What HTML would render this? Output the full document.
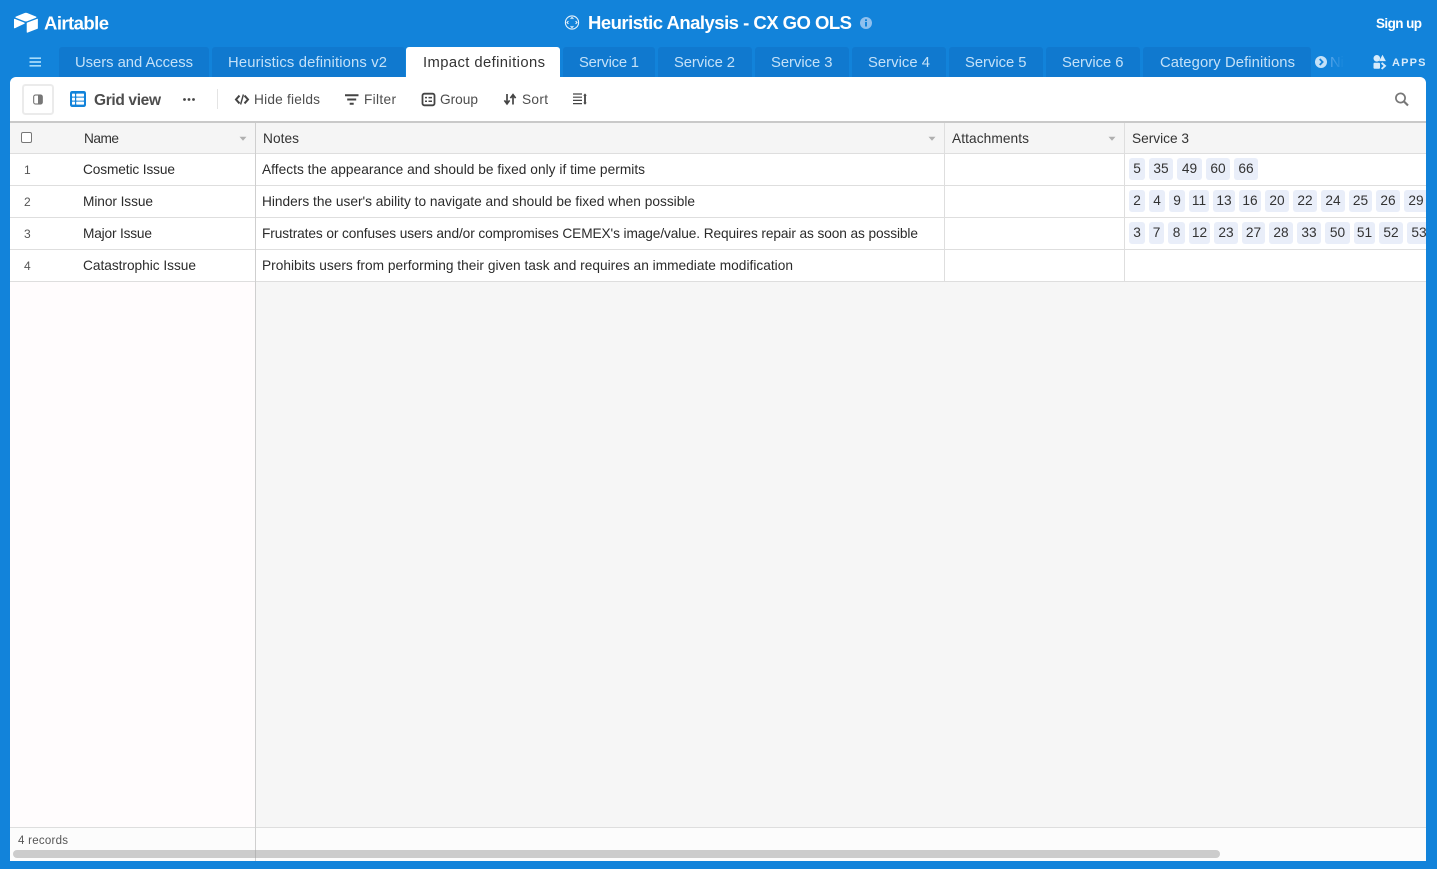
<!DOCTYPE html>
<html><head><meta charset="utf-8"><title>Heuristic Analysis - CX GO OLS</title>
<style>
html,body{margin:0;padding:0;background:#1283da;overflow:hidden}
svg{display:block}
text{font-family:"Liberation Sans",sans-serif;fill:#333;white-space:pre}
.tab{font-size:14.8px;fill:#c4e1f8}
.tb{font-size:13.7px;fill:#4d4d4d}
.h{font-size:13.7px;fill:#333}
.c{font-size:13.7px;fill:#2b2b2b}
.n{font-size:12px;fill:#555}
.chip{font-size:13.7px;fill:#333;text-anchor:middle}
</style></head><body>
<svg width="1437" height="869" viewBox="0 0 1437 869" xmlns="http://www.w3.org/2000/svg">
<defs>
<linearGradient id="fade" x1="0" x2="1"><stop offset="0" stop-color="#5ba8ea"/><stop offset="1" stop-color="#1283da"/></linearGradient>
<clipPath id="grid"><rect x="1125" y="154" width="301" height="128"/></clipPath>
</defs>
<rect width="1437" height="869" fill="#1283da"/>

<!-- logo -->
<g transform="translate(12.5,11.3) scale(.135)" fill="#fff">
<path d="M90.04 12.37L24.08 39.66C20.41 41.18 20.45 46.39 24.14 47.85L90.38 74.12C96.2 76.43 102.68 76.43 108.5 74.12L174.73 47.85C178.42 46.39 178.46 41.18 174.79 39.66L108.83 12.37C102.82 9.88 96.06 9.88 90.04 12.37"/>
<path d="M105.31 88.46V154.08C105.31 157.2 108.46 159.33 111.36 158.18L185.17 129.54C186.85 128.87 187.96 127.24 187.96 125.43V59.81C187.96 56.69 184.81 54.55 181.91 55.7L108.1 84.35C106.42 85.02 105.31 86.65 105.31 88.46"/>
<path d="M88.08 91.85L66.17 102.42L63.95 103.5L17.71 125.65C14.78 127.07 11.04 124.93 11.04 121.67V60.09C11.04 58.91 11.64 57.89 12.45 57.13C12.79 56.79 13.18 56.51 13.57 56.29C14.68 55.63 16.25 55.45 17.59 55.98L87.71 83.76C91.27 85.17 91.55 90.17 88.08 91.85"/>
</g>
<text x="44" y="29.5" textLength="65" style="font-size:18.5px;font-weight:bold;fill:#fff">Airtable</text>

<!-- title -->
<g fill="none" stroke="#fff" stroke-width="1.1" opacity=".9">
<circle cx="572" cy="22.5" r="6.6"/>
<path d="M570.6 18.9l1.4-1.4 1.4 1.4M570.6 26.1l1.4 1.4 1.4-1.4M568.4 21.1l-1.4 1.4 1.4 1.4M575.6 21.1l1.4 1.4-1.4 1.4"/>
</g>
<text x="588" y="29" textLength="264" style="font-size:18.5px;font-weight:bold;fill:#fff">Heuristic Analysis - CX GO OLS</text>
<circle cx="866" cy="23" r="6" fill="#8fc0ee"/>
<rect x="865" y="22" width="2" height="4.5" fill="#1283da"/><rect x="865" y="19.3" width="2" height="1.8" fill="#1283da"/>
<text x="1376" y="28" textLength="46" style="font-size:13.5px;font-weight:bold;fill:#fff">Sign up</text>

<!-- hamburger -->
<path d="M29.5 58.2h11.5M29.5 62h11.5M29.5 65.8h11.5" stroke="#a6dcfb" stroke-width="1.7" fill="none"/>

<!-- tabs -->
<g fill="#1079cf">
<path d="M59 77V50a3 3 0 0 1 3-3h144a3 3 0 0 1 3 3v27z"/>
<path d="M212 77V50a3 3 0 0 1 3-3h187a3 3 0 0 1 3 3v27z"/>
<path d="M563 77V50a3 3 0 0 1 3-3h86a3 3 0 0 1 3 3v27z"/>
<path d="M658 77V50a3 3 0 0 1 3-3h88a3 3 0 0 1 3 3v27z"/>
<path d="M755 77V50a3 3 0 0 1 3-3h88a3 3 0 0 1 3 3v27z"/>
<path d="M852 77V50a3 3 0 0 1 3-3h88a3 3 0 0 1 3 3v27z"/>
<path d="M949 77V50a3 3 0 0 1 3-3h88a3 3 0 0 1 3 3v27z"/>
<path d="M1046 77V50a3 3 0 0 1 3-3h88a3 3 0 0 1 3 3v27z"/>
<path d="M1143 77V50a3 3 0 0 1 3-3h162a3 3 0 0 1 3 3v27z"/>
</g>
<path d="M406 78V50a3 3 0 0 1 3-3h148a3 3 0 0 1 3 3v28z" fill="#fff"/>
<text class="tab" x="75" y="67" textLength="118">Users and Access</text>
<text class="tab" x="228" y="67" textLength="159">Heuristics definitions v2</text>
<text x="423" y="67" textLength="122" style="font-size:14.8px;fill:#333">Impact definitions</text>
<text class="tab" x="579" y="67" textLength="60">Service 1</text>
<text class="tab" x="674" y="67" textLength="61">Service 2</text>
<text class="tab" x="771" y="67" textLength="61.5">Service 3</text>
<text class="tab" x="868" y="67" textLength="62">Service 4</text>
<text class="tab" x="965" y="67" textLength="61.5">Service 5</text>
<text class="tab" x="1062" y="67" textLength="61.5">Service 6</text>
<text class="tab" x="1160" y="67" textLength="135">Category Definitions</text>

<circle cx="1321" cy="62" r="6" fill="#c4e1f8"/>
<path d="M1319.7 59l2.9 3-2.9 3" fill="none" stroke="#1283da" stroke-width="1.8"/>
<text x="1330" y="67" style="font-size:14.8px;fill:url(#fade)">Ni</text>

<g fill="#d7ebfb">
<circle cx="1376.8" cy="58.3" r="3.3"/>
<path d="M1382.5 54.8l3.4 6.3h-6.8z"/>
<rect x="1373.5" y="62.8" width="6.5" height="6" rx="1"/>
</g>
<path d="M1381.6 62.9l3.4 3-3.4 3" fill="none" stroke="#d7ebfb" stroke-width="1.9"/>
<text x="1392" y="66" textLength="33.5" style="font-size:11px;font-weight:bold;fill:#d7ebfb">APPS</text>

<!-- card -->
<path d="M10 861V83a6 6 0 0 1 6-6h390v1h154v-1h860a6 6 0 0 1 6 6v778z" fill="#fff"/>

<!-- toolbar -->
<rect x="23" y="85" width="30" height="29" rx="2.5" fill="#fff" stroke="#ebebeb" stroke-width="2"/>
<rect x="33.7" y="95" width="8.6" height="9" rx="1.8" fill="#fff" stroke="#666" stroke-width="1"/>
<path d="M38 95h2.5a1.8 1.8 0 0 1 1.8 1.8v5.4a1.8 1.8 0 0 1-1.8 1.8H38z" fill="#777"/>

<rect x="70" y="91" width="16" height="16" rx="2.2" fill="#1283da"/>
<g fill="#fff">
<rect x="72" y="93.6" width="3" height="3" rx=".6"/><rect x="76.2" y="93.6" width="7.8" height="3" rx=".6"/>
<rect x="72" y="97.6" width="3" height="3" rx=".6"/><rect x="76.2" y="97.6" width="7.8" height="3" rx=".6"/>
<rect x="72" y="101.6" width="3" height="3" rx=".6"/><rect x="76.2" y="101.6" width="7.8" height="3" rx=".6"/>
</g>
<text x="94" y="105" textLength="67" style="font-size:15.5px;font-weight:bold;fill:#4d4d4d">Grid view</text>
<g fill="#444"><circle cx="184.5" cy="99.5" r="1.4"/><circle cx="189" cy="99.5" r="1.4"/><circle cx="193.5" cy="99.5" r="1.4"/></g>
<rect x="217" y="89" width="1" height="20" fill="#e4e4e4"/>

<g fill="none" stroke="#444" stroke-width="2">
<path d="M239.5 95.6l-3.5 3.9 3.5 3.9M244.5 95.6l3.5 3.9-3.5 3.9"/>
<path d="M243.4 94.5l-2.8 10" stroke-width="1.4"/>
</g>
<text class="tb" x="254" y="104" textLength="66">Hide fields</text>

<path d="M345 95.2h13.5M347.2 99.5h9M349.7 103.7h4" stroke="#444" stroke-width="2" fill="none"/>
<text class="tb" x="364" y="104" textLength="32">Filter</text>

<rect x="422.5" y="93.7" width="12" height="11.6" rx="1.8" fill="none" stroke="#444" stroke-width="1.8"/>
<path d="M425 97.6h2M425 101.3h2M428.5 97.6h3.5M428.5 101.3h3.5" stroke="#444" stroke-width="1.5" fill="none"/>
<text class="tb" x="440" y="104" textLength="38">Group</text>

<path d="M507 94v9.5M504.4 100.4l2.6 3.4 2.6-3.4M513 104.5v-9.5M510.4 98.1l2.6-3.4 2.6 3.4" stroke="#444" stroke-width="1.7" fill="none"/>
<text class="tb" x="522" y="104" textLength="26">Sort</text>

<path d="M573 94h9M573 97.2h9M573 100.4h9M573 103.6h9" stroke="#444" stroke-width="1.2" fill="none"/>
<path d="M585 95v8" stroke="#444" stroke-width="1.8" fill="none"/>
<path d="M583.2 95.6l1.8-2.2 1.8 2.2zM583.2 102.6l1.8 2.2 1.8-2.2z" fill="#444"/>

<circle cx="1400.5" cy="98" r="4.6" fill="none" stroke="#777" stroke-width="1.7"/>
<path d="M1404 101.5l4 4" stroke="#777" stroke-width="2.1" fill="none"/>

<!-- grid backgrounds -->
<rect x="10" y="121" width="1416" height="2" fill="#c9c9c9"/>
<rect x="10" y="123" width="1416" height="30" fill="#f5f5f5"/>
<rect x="256" y="282" width="1170" height="545" fill="#f6f6f6"/>
<rect x="10" y="282" width="245" height="545" fill="#fffcfd"/>
<rect x="10" y="828" width="1416" height="33" fill="#fcfcfc"/>
<g fill="#dedede">
<rect x="10" y="153" width="1416" height="1"/>
<rect x="10" y="185" width="1416" height="1"/>
<rect x="10" y="217" width="1416" height="1"/>
<rect x="10" y="249" width="1416" height="1"/>
<rect x="10" y="281" width="1416" height="1"/>
<rect x="10" y="827" width="1416" height="1"/>
<rect x="944" y="123" width="1" height="159"/>
<rect x="1124" y="123" width="1" height="159"/>
</g>
<rect x="255" y="123" width="1" height="738" fill="#cfcfcf"/>

<!-- header -->
<rect x="21.5" y="132.5" width="10" height="10" rx="1.5" fill="#fff" stroke="#777" stroke-width="1"/>
<text class="h" x="84" y="143" textLength="35">Name</text>
<text class="h" x="263" y="143" textLength="36">Notes</text>
<text class="h" x="952" y="143" textLength="77">Attachments</text>
<text class="h" x="1132" y="143" textLength="57">Service 3</text>
<g fill="#b0b0b0">
<path d="M239.5 136.8h7l-3.5 4z"/>
<path d="M928.5 136.8h7l-3.5 4z"/>
<path d="M1108.5 136.8h7l-3.5 4z"/>
</g>

<!-- rows -->
<text class="n" x="24" y="174">1</text>
<text class="n" x="24" y="206">2</text>
<text class="n" x="24" y="238">3</text>
<text class="n" x="24" y="270">4</text>
<text class="c" x="83" y="174" textLength="92">Cosmetic Issue</text>
<text class="c" x="83" y="206" textLength="70">Minor Issue</text>
<text class="c" x="83" y="238" textLength="69">Major Issue</text>
<text class="c" x="83" y="270" textLength="113">Catastrophic Issue</text>
<text class="c" x="262" y="174" textLength="383">Affects the appearance and should be fixed only if time permits</text>
<text class="c" x="262" y="206" textLength="433">Hinders the user's ability to navigate and should be fixed when possible</text>
<text class="c" x="262" y="238" textLength="656">Frustrates or confuses users and/or compromises CEMEX's image/value. Requires repair as soon as possible</text>
<text class="c" x="262" y="270" textLength="531">Prohibits users from performing their given task and requires an immediate modification</text>

<!-- chips -->
<g clip-path="url(#grid)">
<g fill="#e9eef9">
<rect x="1129" y="158" width="16" height="22" rx="3"/><rect x="1149" y="158" width="24" height="22" rx="3"/><rect x="1177" y="158" width="25" height="22" rx="3"/><rect x="1206" y="158" width="24" height="22" rx="3"/><rect x="1234" y="158" width="24" height="22" rx="3"/>
<rect x="1129" y="190" width="16" height="22" rx="3"/><rect x="1149" y="190" width="16" height="22" rx="3"/><rect x="1169" y="190" width="16" height="22" rx="3"/><rect x="1189" y="190" width="20" height="22" rx="3"/><rect x="1213" y="190" width="22" height="22" rx="3"/><rect x="1239" y="190" width="22" height="22" rx="3"/><rect x="1265" y="190" width="24" height="22" rx="3"/><rect x="1293" y="190" width="24" height="22" rx="3"/><rect x="1321" y="190" width="24" height="22" rx="3"/><rect x="1349" y="190" width="23" height="22" rx="3"/><rect x="1376" y="190" width="24" height="22" rx="3"/><rect x="1404" y="190" width="24" height="22" rx="3"/>
<rect x="1129" y="222" width="16" height="22" rx="3"/><rect x="1149" y="222" width="15" height="22" rx="3"/><rect x="1168" y="222" width="17" height="22" rx="3"/><rect x="1189" y="222" width="21" height="22" rx="3"/><rect x="1214" y="222" width="24" height="22" rx="3"/><rect x="1242" y="222" width="23" height="22" rx="3"/><rect x="1269" y="222" width="24" height="22" rx="3"/><rect x="1297" y="222" width="24" height="22" rx="3"/><rect x="1325" y="222" width="25" height="22" rx="3"/><rect x="1354" y="222" width="21" height="22" rx="3"/><rect x="1379" y="222" width="24" height="22" rx="3"/><rect x="1407" y="222" width="24" height="22" rx="3"/>
</g>
<text class="chip" x="1137" y="173">5</text><text class="chip" x="1161" y="173">35</text><text class="chip" x="1189.5" y="173">49</text><text class="chip" x="1218" y="173">60</text><text class="chip" x="1246" y="173">66</text>
<text class="chip" x="1137" y="205">2</text><text class="chip" x="1157" y="205">4</text><text class="chip" x="1177" y="205">9</text><text class="chip" x="1199" y="205">11</text><text class="chip" x="1224" y="205">13</text><text class="chip" x="1250" y="205">16</text><text class="chip" x="1277" y="205">20</text><text class="chip" x="1305" y="205">22</text><text class="chip" x="1333" y="205">24</text><text class="chip" x="1360.5" y="205">25</text><text class="chip" x="1388" y="205">26</text><text class="chip" x="1416" y="205">29</text>
<text class="chip" x="1137" y="237">3</text><text class="chip" x="1156.5" y="237">7</text><text class="chip" x="1176.5" y="237">8</text><text class="chip" x="1199.5" y="237">12</text><text class="chip" x="1226" y="237">23</text><text class="chip" x="1253.5" y="237">27</text><text class="chip" x="1281" y="237">28</text><text class="chip" x="1309" y="237">33</text><text class="chip" x="1337.5" y="237">50</text><text class="chip" x="1364.5" y="237">51</text><text class="chip" x="1391" y="237">52</text><text class="chip" x="1419" y="237">53</text>
</g>

<!-- footer -->
<text x="18" y="844" textLength="50" style="font-size:11.5px;fill:#555">4 records</text>
<rect x="13" y="850" width="1207" height="8" rx="4" fill="#cccccc"/>
<rect x="255" y="850" width="1" height="8" fill="#b5b5b5"/>
</svg>
</body></html>
